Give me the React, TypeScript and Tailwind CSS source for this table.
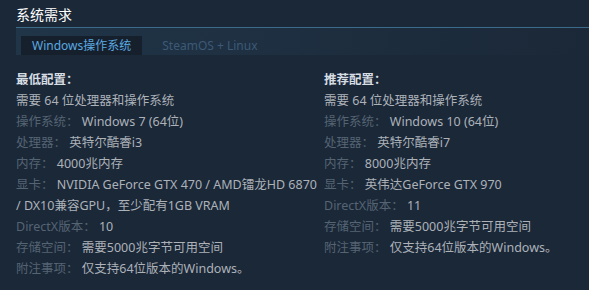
import React from 'react';

type Row = { label?: string; value: React.ReactNode };

const minimum: Row[] = [
  { value: '需要 64 位处理器和操作系统' },
  { label: '操作系统：', value: 'Windows 7 (64位)' },
  { label: '处理器：', value: '英特尔酷睿i3' },
  { label: '内存：', value: '4000兆内存' },
  {
    label: '显卡：',
    value: (
      <>
        NVIDIA GeForce GTX 470 / AMD镭龙HD 6870
        <br />/ DX10兼容GPU，至少配有1GB VRAM
      </>
    ),
  },
  { label: 'DirectX版本：', value: '10' },
  { label: '存储空间：', value: '需要5000兆字节可用空间' },
  { label: '附注事项：', value: '仅支持64位版本的Windows。' },
];

const recommended: Row[] = [
  { value: '需要 64 位处理器和操作系统' },
  { label: '操作系统：', value: 'Windows 10 (64位)' },
  { label: '处理器：', value: '英特尔酷睿i7' },
  { label: '内存：', value: '8000兆内存' },
  { label: '显卡：', value: '英伟达GeForce GTX 970' },
  { label: 'DirectX版本：', value: '11' },
  { label: '存储空间：', value: '需要5000兆字节可用空间' },
  { label: '附注事项：', value: '仅支持64位版本的Windows。' },
];

function ReqColumn({ title, rows, className }: { title: string; rows: Row[]; className?: string }) {
  return (
    <div className={className}>
      <div className="text-[#d6dde3] font-bold">{title}</div>
      <ul>
        {rows.map((r, i) => (
          <li key={i} className="text-[#acb2b8]">
            {r.label && <span className="text-[#556473]">{r.label} </span>}
            {r.value}
          </li>
        ))}
      </ul>
    </div>
  );
}

export default function App() {
  return (
    <div
      className="min-h-screen w-full bg-[#1b2838] overflow-hidden"
      style={{ fontFamily: '"Noto Sans", "Noto Sans CJK SC", sans-serif' }}
    >
      {/* Section title */}
      <div className="pl-4 pt-[5px] h-[27px] text-[14px] leading-[20px] text-white">系统需求</div>

      {/* OS tabs */}
      <div className="ml-4 h-[28px] border-t border-[#3b6a8a] bg-gradient-to-r from-[#203548] to-[#1b2838] flex items-end pl-[5px] text-[12px]">
        <div className="h-[19px] px-[11px] bg-[#16202d] text-[#5aa9e0] leading-[19px]">Windows操作系统</div>
        <div className="h-[19px] px-5 text-[#3c5a76] leading-[19px]">SteamOS + Linux</div>
      </div>

      {/* Requirements */}
      <div className="flex pl-4 pt-[14px] text-[12.5px] leading-[21px]">
        <ReqColumn title="最低配置：" rows={minimum} className="w-[308px] shrink-0" />
        <ReqColumn title="推荐配置：" rows={recommended} className="flex-1" />
      </div>
    </div>
  );
}
